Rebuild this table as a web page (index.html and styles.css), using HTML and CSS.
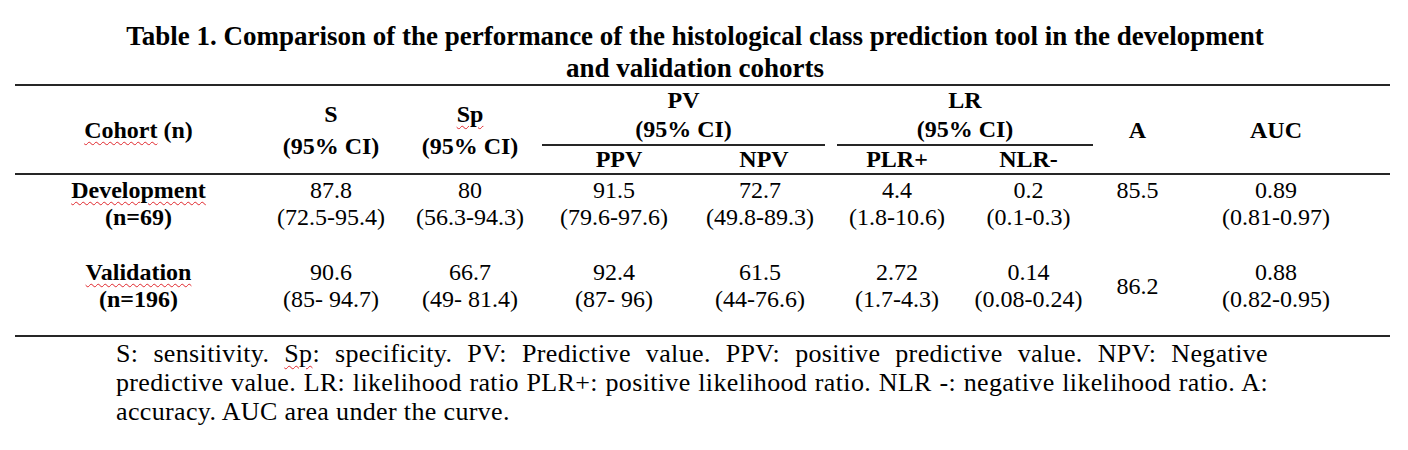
FILE: index.html
```html
<!DOCTYPE html>
<html lang="en">
<head>
<meta charset="utf-8">
<title>Table 1</title>
<link rel="stylesheet" href="styles.css">
</head>
<body>
<main class="page">
  <h1 class="title">Table 1. Comparison of the performance of the histological class prediction tool in the development<br>and validation cohorts</h1>
  <table class="results">
    <colgroup>
      <col class="c-cohort">
      <col class="c-s">
      <col class="c-sp">
      <col class="c-ppv">
      <col class="c-npv">
      <col class="c-plr">
      <col class="c-nlr">
      <col class="c-a">
      <col class="c-auc">
    </colgroup>
    <thead>
      <tr>
        <th rowspan="2" class="single"><span class="spell">Cohort</span> (n)</th>
        <th rowspan="2" class="double">S<br>(95% CI)</th>
        <th rowspan="2" class="double"><span class="spell">Sp</span><br>(95% CI)</th>
        <th colspan="2" class="group"><div class="group-label group-pv">PV<br>(95% CI)</div></th>
        <th colspan="2" class="group"><div class="group-label group-lr">LR<br>(95% CI)</div></th>
        <th rowspan="2" class="single">A</th>
        <th rowspan="2" class="single auc">AUC</th>
      </tr>
      <tr class="sub">
        <th class="sub-ppv">PPV</th>
        <th class="sub-npv">NPV</th>
        <th>PLR+</th>
        <th>NLR-</th>
      </tr>
    </thead>
    <tbody>
      <tr class="row-dev">
        <th><span class="spell">Development</span><br>(n=69)</th>
        <td>87.8<br>(72.5-95.4)</td>
        <td>80<br>(56.3-94.3)</td>
        <td>91.5<br>(79.6-97.6)</td>
        <td>72.7<br>(49.8-89.3)</td>
        <td>4.4<br>(1.8-10.6)</td>
        <td>0.2<br>(0.1-0.3)</td>
        <td>85.5</td>
        <td class="auc">0.89<br>(0.81-0.97)</td>
      </tr>
      <tr class="row-val">
        <th><span class="spell">Validation</span><br>(n=196)</th>
        <td>90.6<br>(85- 94.7)</td>
        <td>66.7<br>(49- 81.4)</td>
        <td>92.4<br>(87- 96)</td>
        <td>61.5<br>(44-76.6)</td>
        <td>2.72<br>(1.7-4.3)</td>
        <td>0.14<br>(0.08-0.24)</td>
        <td class="middle">86.2</td>
        <td class="auc">0.88<br>(0.82-0.95)</td>
      </tr>
    </tbody>
  </table>
  <div class="note">
    <span class="note-line justify">S: sensitivity. <span class="spell">Sp</span>: specificity. PV: Predictive value. PPV: positive predictive value. NPV: Negative</span>
    <span class="note-line justify">predictive value. LR: likelihood ratio PLR+: positive likelihood ratio. NLR -: negative likelihood ratio. A:</span>
    <span class="note-line">accuracy. AUC area under the curve.</span>
  </div>
</main>
</body>
</html>
```

FILE: styles.css
```css
html, body {
  margin: 0;
  padding: 0;
  background: #ffffff;
}

body {
  font-family: "Liberation Serif", "Times New Roman", serif;
  color: #000000;
}

.page {
  width: 1375px;
  padding: 20px 18px 0 15px;
}

.title {
  margin: 0;
  padding-right: 15px;
  font-size: 27px;
  line-height: 32px;
  font-weight: bold;
  text-align: center;
}

.results {
  width: 1375px;
  border-collapse: collapse;
  table-layout: fixed;
  font-size: 24px;
}

.c-cohort { width: 247px; }
.c-s { width: 138px; }
.c-sp { width: 140px; }
.c-ppv { width: 148px; }
.c-npv { width: 144px; }
.c-plr { width: 130px; }
.c-nlr { width: 133px; }
.c-a { width: 85px; }
.c-auc { width: 210px; }

.results thead {
  border-top: 2px solid #262626;
  border-bottom: 2px solid #262626;
}

.results tbody {
  border-bottom: 2px solid #262626;
}

.results th,
.results td {
  padding: 0;
  text-align: center;
  font-weight: normal;
}

.results thead th {
  font-weight: bold;
  line-height: 26px;
  vertical-align: middle;
}

.results thead th.double {
  line-height: 32px;
}

.results thead th.group {
  padding: 0;
  height: 58px;
  vertical-align: top;
}

.group-label {
  line-height: 29px;
  border-bottom: 2px solid #262626;
}

.group-pv {
  margin: 0 7px 0 2px;
}

.group-lr {
  margin: 0 2px 0 5px;
}

.results thead tr.sub th {
  height: 28px;
  padding: 0 0 1px 0;
  vertical-align: top;
  box-sizing: border-box;
}

.results thead tr.sub th.sub-ppv {
  padding-left: 10px;
}

.results thead tr.sub th.sub-npv {
  padding-left: 8px;
}

.results th.auc,
.results td.auc {
  padding-right: 18px;
}

.results tbody th,
.results tbody td {
  line-height: 27px;
  vertical-align: top;
}

.results tbody th {
  font-weight: bold;
}

.results tbody tr.row-dev th,
.results tbody tr.row-dev td {
  padding-top: 2px;
  padding-bottom: 28px;
}

.results tbody tr.row-val th,
.results tbody tr.row-val td {
  padding-top: 0;
  padding-bottom: 22px;
}

.results tbody td.middle {
  vertical-align: middle;
  padding-bottom: 22px;
}

.spell {
  text-decoration-line: underline;
  text-decoration-style: wavy;
  text-decoration-color: #e0262b;
  text-decoration-thickness: 1px;
  text-underline-offset: 3px;
}

.note {
  width: 1152px;
  margin: 2px 0 0 101px;
  font-size: 26px;
  line-height: 29px;
  letter-spacing: 0.35px;
}

.note-line {
  display: block;
  white-space: nowrap;
}

.note-line.justify {
  white-space: normal;
  text-align: justify;
  text-align-last: justify;
}
```
